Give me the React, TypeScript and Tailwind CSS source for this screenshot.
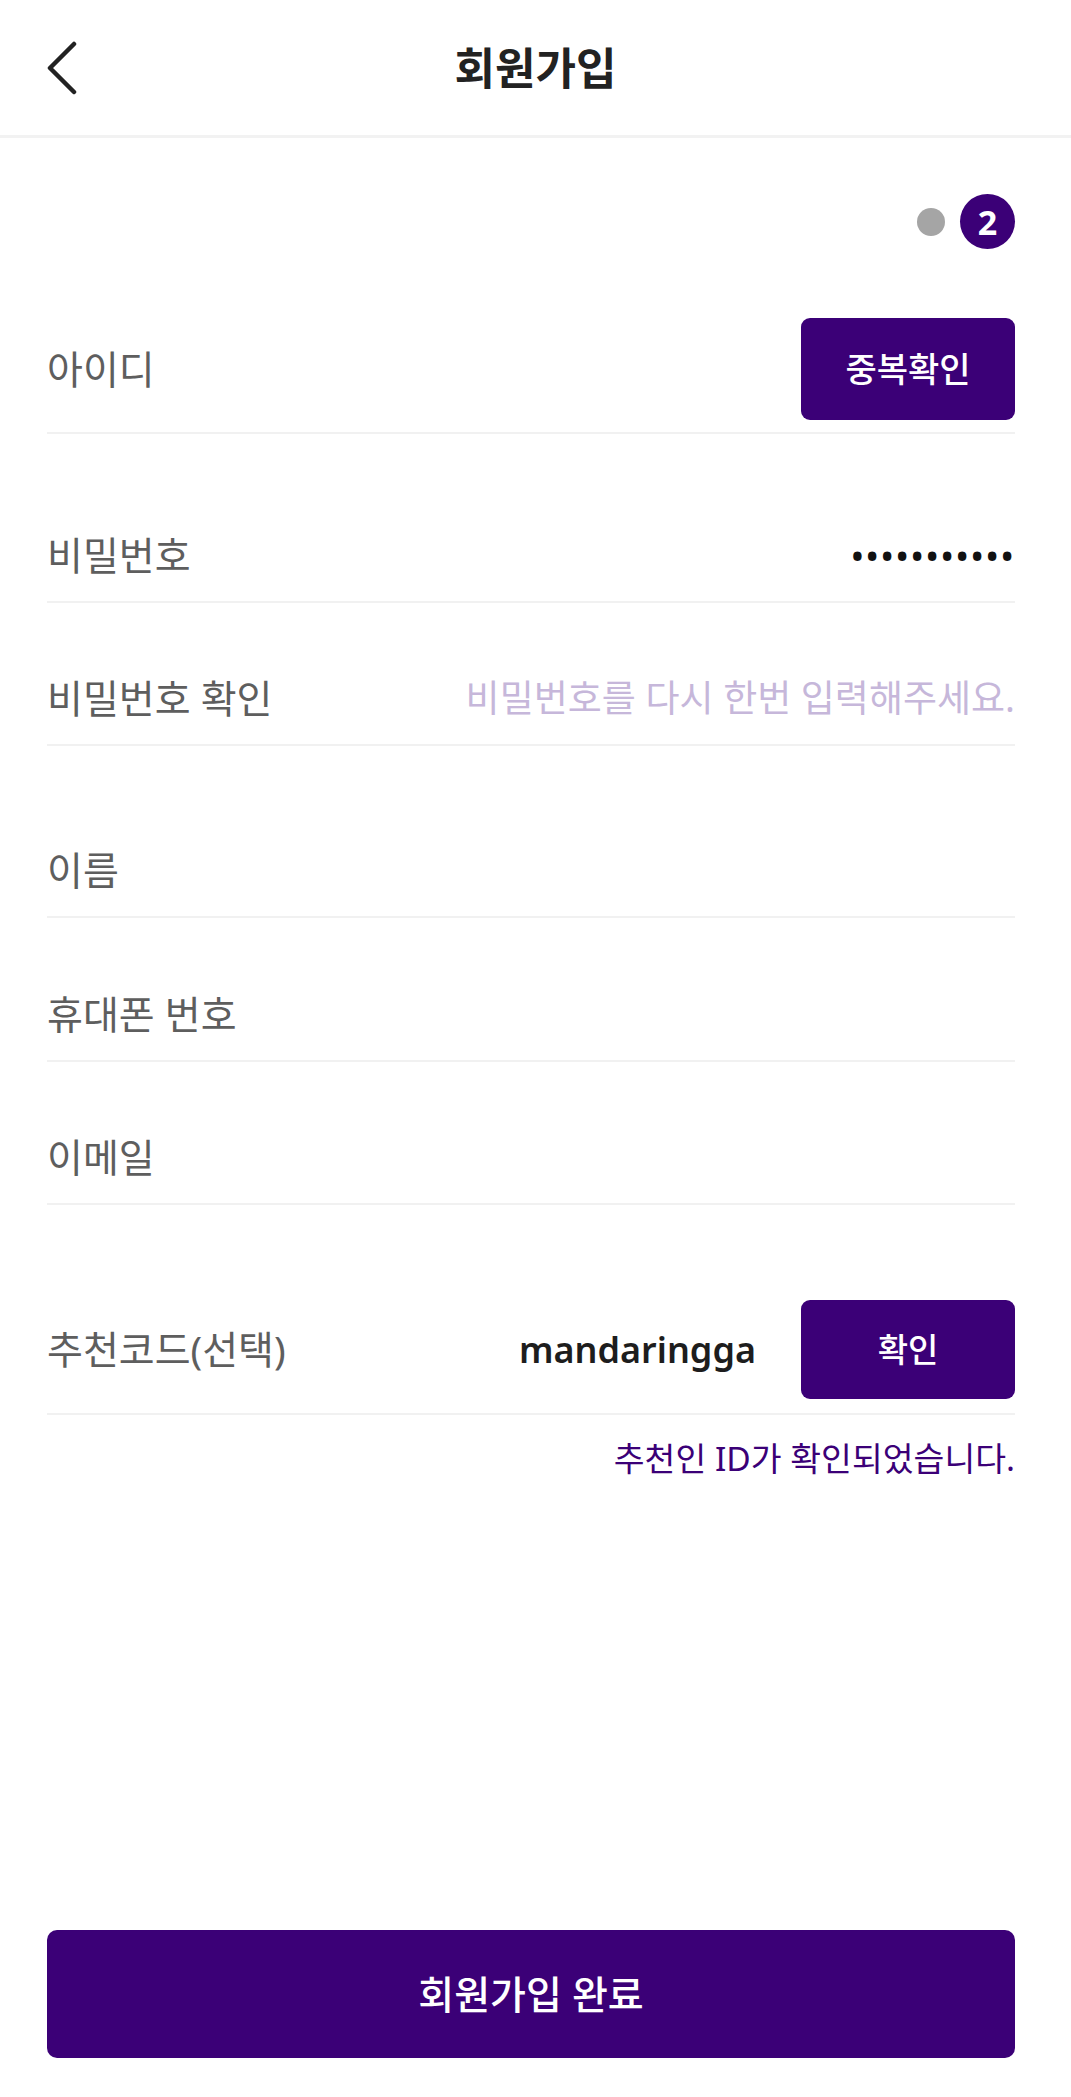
import React from 'react';

const font = "font-['Noto_Sans','Noto_Sans_CJK_KR',sans-serif]";

const Row = ({ label, className = '', children }: { label: string; className?: string; children?: React.ReactNode }) => (
  <div className={`flex h-[92px] items-center justify-between border-b-2 border-[#f1f1f1] pb-[2px] ${className}`}>
    <span className="text-[39px] text-[#5e5e5e]">{label}</span>
    {children}
  </div>
);

const SignUpPage = () => {
  return (
    <div className={`min-h-screen flex flex-col bg-white ${font}`}>
      {/* header */}
      <header className="grid h-[138px] grid-cols-[1fr_auto_1fr] items-center border-b-[3px] border-[#f2f2f2] px-[44px]">
        <button className="flex items-center justify-start">
          <svg width="34" height="54" viewBox="0 0 34 54" fill="none">
            <path d="M30 3 L6 27 L30 51" stroke="#222" strokeWidth="4.5" strokeLinecap="round" strokeLinejoin="round" />
          </svg>
        </button>
        <h1 className="text-[44px] font-bold text-[#222]">회원가입</h1>
        <div />
      </header>

      <main className="flex flex-1 flex-col pl-[47px] pr-[56px]">
        {/* step indicator */}
        <div className="mt-[56px] flex items-center justify-end gap-[15px]">
          <span className="h-[28px] w-[28px] rounded-full bg-[#a5a5a5]" />
          <span className="flex h-[55px] w-[55px] items-center justify-center rounded-full bg-[#3b0077] text-[34px] font-bold leading-none text-white">
            2
          </span>
        </div>

        {/* id */}
        <div className="mt-[69px] flex items-center justify-between border-b-2 border-[#f1f1f1] pb-[12px]">
          <span className="text-[39px] text-[#5e5e5e]">아이디</span>
          <button className="flex h-[102px] w-[214px] items-center justify-center rounded-[9px] bg-[#3b0077] text-[34px] font-medium text-white">
            중복확인
          </button>
        </div>

        <Row label="비밀번호" className="mt-[77px]">
          <span className="text-[38px] leading-none tracking-[0.7px] text-[#111]">•••••••••••</span>
        </Row>
        <Row label="비밀번호 확인" className="mt-[51px]">
          <span className="text-[37px] text-[#c6b7da]">비밀번호를 다시 한번 입력해주세요.</span>
        </Row>

        <Row label="이름" className="mt-[80px]" />
        <Row label="휴대폰 번호" className="mt-[52px]" />
        <Row label="이메일" className="mt-[51px]" />

        {/* referral code */}
        <div className="mt-[95px] flex items-center justify-between border-b-2 border-[#f1f1f1] pb-[14px]">
          <span className="text-[39px] text-[#5e5e5e]">추천코드(선택)</span>
          <div className="flex items-center gap-[45px]">
            <span className="text-[36px] font-semibold text-[#1d1d1d]">mandaringga</span>
            <button className="flex h-[99px] w-[214px] items-center justify-center rounded-[9px] bg-[#3b0077] text-[33px] font-medium text-white">
              확인
            </button>
          </div>
        </div>
        <p className="mt-[18px] text-right text-[33.5px] text-[#3b0077]">추천인 ID가 확인되었습니다.</p>

        <button className="mt-auto mb-[39px] flex h-[128px] w-full items-center justify-center rounded-[10px] bg-[#3b0077] text-[39px] font-medium text-white">
          회원가입 완료
        </button>
      </main>
    </div>
  );
};

export default function App() {
  return <SignUpPage />;
}
